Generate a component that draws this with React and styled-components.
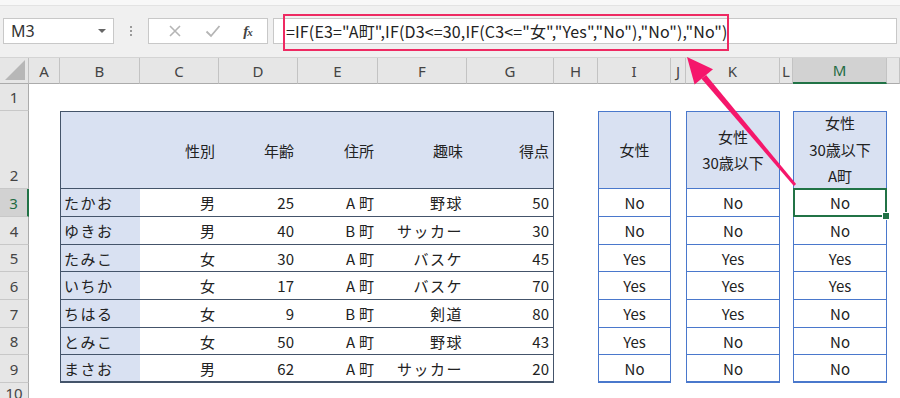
import React from 'react'
import styled, { createGlobalStyle } from 'styled-components'

const GlobalStyle = createGlobalStyle`
  html, body { margin: 0; padding: 0; background: #fff; }
  body {
    width: 900px;
    height: 398px;
    overflow: hidden;
    font-family: "Noto Sans", "Noto Sans CJK JP", sans-serif;
  }
  * { box-sizing: border-box; }
`;

const Page = styled.div`
    position: relative;
    width: 900px;
    height: 398px;
    overflow: hidden;
    background: #fff;
`;

const TopStrip = styled.div`
    height: 6px;
    background: #f8f8f8;
    border-bottom: 1px solid #e3e3e3;
`;

const FormulaBar = styled.div`
    height: 51px;
    background: #f0f0f0;
    display: flex;
    align-items: flex-start;
    padding: 12px 3px 0 3px;
`;

const NameBox = styled.div`
    width: 111px;
    height: 26px;
    background: #fff;
    border: 1px solid #c8c8c8;
    display: flex;
    align-items: center;
    justify-content: space-between;
    padding: 0 7px 0 7px;
    font-family: "Noto Sans", sans-serif;
    font-size: 16px;
    color: #333;
`;

const DropArrow = styled.span`
    width: 0;
    height: 0;
    border-left: 4px solid transparent;
    border-right: 4px solid transparent;
    border-top: 4px solid #666;
`;

const Dots = styled.div`
    width: 34px;
    height: 26px;
    display: flex;
    flex-direction: column;
    align-items: center;
    justify-content: center;
    gap: 2px;
    span {
        width: 2px;
        height: 2px;
        background: #9a9a9a;
    }
`;

const FuncBox = styled.div`
    width: 120px;
    height: 26px;
    background: #fff;
    border: 1px solid #c8c8c8;
    display: flex;
    align-items: center;
    justify-content: space-around;
    padding: 0 4px 0 8px;
`;

const Fx = styled.span`
    font-family: "Liberation Serif", serif;
    font-style: italic;
    font-weight: 700;
    font-size: 15px;
    color: #444;
    letter-spacing: -1px;
    sub {
        font-size: 11px;
        vertical-align: baseline;
    }
`;

const FormulaBox = styled.div`
    flex: 1;
    margin-left: 5px;
    height: 26px;
    background: #fff;
    border: 1px solid #c8c8c8;
    display: flex;
    align-items: center;
    padding-left: 12px;
    font-family: "Noto Sans CJK JP", sans-serif;
    font-size: 16px;
    letter-spacing: 0.15px;
    color: #222;
    white-space: nowrap;
`;

const Highlight = styled.div`
    position: absolute;
    left: 283px;
    top: 14px;
    width: 446px;
    height: 37px;
    border: 2px solid #ee2a62;
    pointer-events: none;
`;

const Sheet = styled.div`
    display: grid;
    grid-template-columns: 29px 31px 80px 79px 79px 80px 89px 87px 44px 73px 15px 94px 13px 94px 13px;
    grid-template-rows: 26px 27px 78px 28px 28px 27px 28px 28px 27px 28px 24px;
    border-top: 1px solid #d4d4d4;
`;

const Corner = styled.div`
    grid-column: 1;
    grid-row: 1;
    background: #e6e6e6;
    border-right: 1px solid #c0c0c0;
    border-bottom: 1px solid #ababab;
    position: relative;
    &::after {
        content: "";
        position: absolute;
        right: 3px;
        bottom: 3px;
        border-left: 20px solid transparent;
        border-bottom: 20px solid #b7b7b7;
    }
`;

const ColHead = styled.div`
    grid-row: 1;
    background: ${({ selected }) => selected ? '#d2d2d2' : '#e6e6e6'};
    border-right: 1px solid #c3c3c3;
    border-bottom: ${({ selected }) => selected ? '2px solid #217346' : '1px solid #ababab'};
    display: flex;
    align-items: center;
    justify-content: center;
    font-family: "Noto Sans", sans-serif;
    font-size: 15px;
    color: ${({ selected }) => selected ? '#1f6b43' : '#444'};
    overflow: hidden;
`;

const RowHead = styled.div`
    grid-column: 1;
    grid-row: ${({ row }) => row};
    background: ${({ selected }) => selected ? '#d2d2d2' : '#e6e6e6'};
    border-bottom: 1px solid #c8c8c8;
    border-right: ${({ selected }) => selected ? '2px solid #217346' : '1px solid #ababab'};
    display: flex;
    align-items: flex-end;
    justify-content: center;
    padding-bottom: 3px;
    font-family: "Noto Sans", sans-serif;
    font-size: 15px;
    line-height: 20px;
    color: ${({ selected }) => selected ? '#1f6b43' : '#444'};
    overflow: hidden;
`;

const line = '1px solid #44546a';

const DataCell = styled.div`
    grid-column: ${({ col }) => col};
    grid-row: ${({ row }) => row};
    background: ${({ fill }) => fill ? '#d9e1f2' : '#fff'};
    border-top: ${({ top }) => top ? line : 'none'};
    border-bottom: ${({ bottom }) => bottom ? '2px solid #44546a' : line};
    border-left: ${({ first }) => first ? line : 'none'};
    border-right: ${({ last }) => last ? line : 'none'};
    display: flex;
    align-items: center;
    justify-content: ${({ left }) => left ? 'flex-start' : 'flex-end'};
    padding: 0 ${({ spacing }) => spacing > 2 ? 0 : 4}px 0 3px;
    font-family: "Noto Sans CJK JP", sans-serif;
    font-size: 15px;
    letter-spacing: ${({ spacing }) => spacing || 0}px;
    color: #222;
    white-space: nowrap;
`;

const blue = '1px solid #4a78cc';

const CheckCell = styled.div`
    grid-column: ${({ col }) => col};
    grid-row: ${({ row }) => row};
    position: relative;
    background: ${({ head }) => head ? '#d9e1f2' : '#fff'};
    border-left: ${blue};
    border-right: ${blue};
    border-top: ${({ head }) => head ? blue : 'none'};
    border-bottom: ${({ bottom }) => bottom ? '2px solid #4a78cc' : blue};
    display: flex;
    flex-direction: column;
    align-items: center;
    justify-content: center;
    font-family: "Noto Sans CJK JP", sans-serif;
    font-size: 15px;
    color: #222;
    white-space: nowrap;
    span {
        display: block;
        height: 26.5px;
        line-height: 26.5px;
    }
    ${({ active }) => active && `
        &::after {
            content: "";
            position: absolute;
            left: -1px;
            top: -1px;
            right: -1px;
            bottom: -1px;
            border: 2px solid #217346;
        }
        &::before {
            content: "";
            position: absolute;
            right: -4px;
            bottom: -4px;
            width: 6px;
            height: 6px;
            background: #217346;
            border: 1px solid #fff;
            z-index: 1;
        }
    `}
`;

const Arrow = styled.svg`
    position: absolute;
    left: 0;
    top: 0;
    width: 900px;
    height: 398px;
    pointer-events: none;
`;

const columns = ['A', 'B', 'C', 'D', 'E', 'F', 'G', 'H', 'I', 'J', 'K', 'L', 'M', '']

const people = [
    ['たかお', '男', '25', 'A町', '野球', '50', 'No', 'No', 'No'],
    ['ゆきお', '男', '40', 'B町', 'サッカー', '30', 'No', 'No', 'No'],
    ['たみこ', '女', '30', 'A町', 'バスケ', '45', 'Yes', 'Yes', 'Yes'],
    ['いちか', '女', '17', 'A町', 'バスケ', '70', 'Yes', 'Yes', 'Yes'],
    ['ちはる', '女', '9', 'B町', '剣道', '80', 'Yes', 'Yes', 'No'],
    ['とみこ', '女', '50', 'A町', '野球', '43', 'Yes', 'No', 'No'],
    ['まさお', '男', '62', 'A町', 'サッカー', '20', 'No', 'No', 'No'],
]

// letter spacing per column of the first table
const spacings = [1.5, 0, 0, 4, 1.5, 0]

const headers = ['', '性別', '年齢', '住所', '趣味', '得点']

const checkHeads = [
    { col: 10, lines: ['女性'] },
    { col: 12, lines: ['女性', '30歳以下'] },
    { col: 14, lines: ['女性', '30歳以下', 'A町'] },
]

const App = () => {
    return (
        <Page>
            <GlobalStyle />
            <TopStrip />
            <FormulaBar>
                <NameBox>M3<DropArrow /></NameBox>
                <Dots><span /><span /><span /></Dots>
                <FuncBox>
                    <svg width="14" height="14" viewBox="0 0 14 14">
                        <path d="M2 2 L12 12 M12 2 L2 12" stroke="#b5b5b5" strokeWidth="1.6" fill="none" />
                    </svg>
                    <svg width="16" height="14" viewBox="0 0 16 14">
                        <path d="M1.5 7.5 L6 12 L14.5 2" stroke="#b5b5b5" strokeWidth="1.8" fill="none" />
                    </svg>
                    <Fx>f<sub>x</sub></Fx>
                </FuncBox>
                <FormulaBox>=IF(E3="A町",IF(D3&lt;=30,IF(C3&lt;="女","Yes","No"),"No"),"No")</FormulaBox>
            </FormulaBar>
            <Sheet>
                <Corner />
                {columns.map((c, i) => (
                    <ColHead key={i} style={{ gridColumn: i + 2 }} selected={c === 'M'}>{c}</ColHead>
                ))}
                {[1, 2, 3, 4, 5, 6, 7, 8, 9, 10].map((n) => (
                    <RowHead key={n} row={n + 1} selected={n === 3}>{n}</RowHead>
                ))}

                {headers.map((h, i) => (
                    <DataCell key={'h' + i} col={i + 3} row={3} fill top first={i === 0} last={i === 5}>{h}</DataCell>
                ))}
                {people.map((p, r) => (
                    p.slice(0, 6).map((v, i) => (
                        <DataCell
                            key={r + '-' + i}
                            col={i + 3}
                            row={r + 4}
                            fill={i === 0}
                            left={i === 0}
                            spacing={spacings[i]}
                            first={i === 0}
                            last={i === 5}
                            bottom={r === people.length - 1}
                        >{v}</DataCell>
                    ))
                ))}

                {checkHeads.map((h) => (
                    <CheckCell key={'c' + h.col} col={h.col} row={3} head>
                        {h.lines.map((l) => <span key={l}>{l}</span>)}
                    </CheckCell>
                ))}
                {people.map((p, r) => (
                    checkHeads.map((h, k) => (
                        <CheckCell
                            key={r + 'c' + k}
                            col={h.col}
                            row={r + 4}
                            bottom={r === people.length - 1}
                            active={r === 0 && k === 2}
                        >{p[6 + k]}</CheckCell>
                    ))
                ))}
            </Sheet>
            <Highlight />
            <Arrow viewBox="0 0 900 398">
                <polygon points="796.1,184 793.9,186 701.5,78.8 706.1,75" fill="#f5176b" />
                <polygon points="687,57 713,69.2 694.6,84.6" fill="#f5176b" />
            </Arrow>
        </Page>
    )
}

export default App
